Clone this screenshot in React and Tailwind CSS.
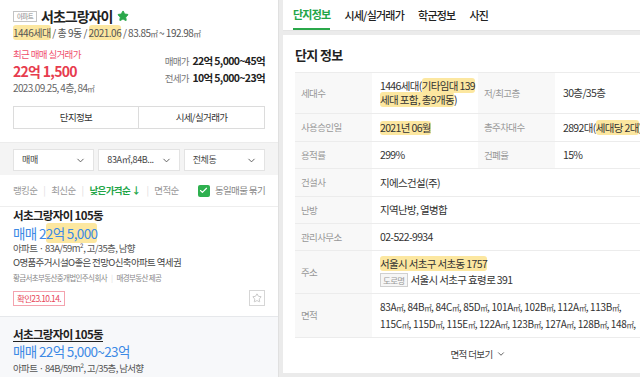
import { ChevronDown, Star, Check } from "lucide-react";

const Mark = ({ children }) => (
  <span className="bg-[#fce7a0] rounded-[3px]">{children}</span>
);

// narrow square-metre sign like the reference font
const M2 = () => <span className="text-[7.5px] tracking-[-0.1em]">㎡</span>;

const Select = ({ label }) => (
  <div className="h-[22px] bg-white border border-[#e3e3e3] flex items-center justify-between pl-[8px] pr-[7px]">
    <span className="text-[9px] text-[#444] tracking-[-0.04em]">{label}</span>
    <ChevronDown size={11} strokeWidth={2} className="text-[#555]" />
  </div>
);

const Row = ({ label, value, label2, value2, h }) => (
  <div className={`flex border-b border-[#ececec] ${h}`}>
    <div className="w-[77px] shrink-0 bg-[#f8f8f8] pl-[6px] flex items-center text-[9.5px] text-[#999]">
      {label}
    </div>
    {label2 ? (
      <>
        <div className="w-[106px] shrink-0 pl-[8px] flex items-center text-[10.5px] text-[#333] leading-[14px]">
          {value}
        </div>
        <div className="w-[77px] shrink-0 bg-[#f8f8f8] pl-[6px] flex items-center text-[9.5px] text-[#999]">
          {label2}
        </div>
        <div className="w-[106px] shrink-0 pl-[8px] flex items-center text-[10.5px] text-[#333] whitespace-nowrap">
          {value2}
        </div>
      </>
    ) : (
      <div className="flex-1 pl-[8px] flex items-center text-[10.5px] text-[#333] leading-[16px]">
        {value}
      </div>
    )}
  </div>
);

const areas1 = ["83A", "84B", "84C", "85D", "101A", "102B", "112A", "113B"];
const areas2 = ["115C", "115D", "115E", "122A", "123B", "127A", "128B", "148"];

export default function App() {
  return (
    <div className="w-[640px] h-[377px] overflow-hidden flex bg-[#ebebeb] font-['Noto_Sans_CJK_KR',sans-serif] tracking-[-0.04em]">
      {/* Left: complex summary + listings */}
      <div className="w-[279px] shrink-0 bg-white border-r border-[#e0e0e0] flex flex-col">
        <div className="px-[13px] pt-[6px]">
          <div className="flex items-center h-[20px] gap-[4px]">
            <span className="border border-[#c4c4c4] text-[6.5px] text-[#888] px-[3px] leading-[9px]">아파트</span>
            <span className="text-[14px] font-bold text-[#222] tracking-[-0.07em]">서초그랑자이</span>
            <Star size={12} className="text-[#2aa84a] fill-[#2aa84a] ml-[1px]" />
          </div>
          <div className="h-[14px] leading-[14px] text-[10px] text-[#555] whitespace-nowrap tracking-[-0.05em]">
            <Mark>1446세대</Mark> / 총 9동 / <Mark>2021.06</Mark> / 83.85<M2 /> ~ 192.98<M2 />
          </div>
          <div className="flex justify-between mt-[7px]">
            <div>
              <div className="h-[14px] leading-[14px] text-[9.5px] text-[#f0506e]">최근 매매 실거래가</div>
              <div className="h-[20px] leading-[20px] text-[14px] font-bold text-[#e73c4e] tracking-[-0.05em]">22억 1,500</div>
              <div className="h-[14px] leading-[14px] text-[10px] text-[#666]">2023.09.25, 4층, 84<M2 /></div>
            </div>
            <div className="pt-[5px] text-right">
              <div className="h-[17px] leading-[17px] text-[9.5px] text-[#777]">
                매매가 <span className="text-[10.5px] font-bold text-[#222] ml-[2px]">22억 5,000~45억</span>
              </div>
              <div className="h-[17px] leading-[17px] text-[9.5px] text-[#777]">
                전세가 <span className="text-[10.5px] font-bold text-[#222] ml-[2px]">10억 5,000~23억</span>
              </div>
            </div>
          </div>
          <div className="mt-[11px] grid grid-cols-2 h-[23px] border border-[#dcdcdc]">
            <div className="flex items-center justify-center text-[9.5px] text-[#333] border-r border-[#dcdcdc]">단지정보</div>
            <div className="flex items-center justify-center text-[9.5px] text-[#333]">시세/실거래가</div>
          </div>
        </div>

        {/* filters */}
        <div className="mt-[13px] h-[33px] bg-[#f4f4f4] px-[13px] pt-[6px] grid grid-cols-3 gap-[4px] border-t border-[#ececec]">
          <Select label="매매" />
          <Select label="83A㎡,84B..." />
          <Select label="전체동" />
        </div>

        {/* sort */}
        <div className="h-[32px] px-[13px] flex items-center justify-between border-b border-[#eeeeee]">
          <div className="flex items-center text-[9.5px] text-[#999]">
            <span>랭킹순</span>
            <span className="mx-[6px] text-[#ddd]">|</span>
            <span>최신순</span>
            <span className="mx-[6px] text-[#ddd]">|</span>
            <span className="text-[#22a547] font-bold">낮은가격순 ↓</span>
            <span className="mx-[6px] text-[#ddd]">|</span>
            <span>면적순</span>
          </div>
          <div className="flex items-center gap-[5px] text-[9.5px] text-[#888]">
            <span className="w-[12px] h-[12px] bg-[#2eb04f] rounded-[2px] flex items-center justify-center">
              <Check size={9} strokeWidth={3} className="text-white" />
            </span>
            <span>동일매물 묶기</span>
          </div>
        </div>

        {/* listing 1 */}
        <div className="px-[13px] pt-[1px] pb-[10px] border-b border-[#e6e8eb]">
          <div className="h-[15px] leading-[15px] text-[11.5px] font-bold text-[#222]">서초그랑자이 105동</div>
          <div className="mt-[2px] h-[16px] leading-[16px] text-[13.5px] text-[#3d8ae5]">
            매매 2<Mark>2억 5,000</Mark>
          </div>
          <div className="h-[14px] leading-[14px] text-[9.5px] text-[#555]">아파트 · 83A/59m², 고/35층, 남향</div>
          <div className="h-[14px] leading-[14px] text-[9.5px] text-[#444]">O명품주거시설O좋은 전망O신축아파트 역세권</div>
          <div className="mt-[2px] h-[14px] leading-[14px] text-[7.5px] text-[#888]">
            황금서초부동산중개법인주식회사 <span className="mx-[3px] text-[#ddd]">|</span> 매경부동산 제공
          </div>
          <div className="mt-[5px] flex items-center justify-between">
            <span className="border border-[#f4a3ae] text-[#e8475a] text-[8.5px] h-[15px] leading-[13px] px-[3px]">확인23.10.14.</span>
            <span className="w-[16px] h-[16px] border border-[#d6d6d6] flex items-center justify-center bg-white">
              <Star size={10} strokeWidth={1.5} className="text-[#aaa]" />
            </span>
          </div>
        </div>

        {/* listing 2 */}
        <div className="flex-1 bg-[#f7f8fa] px-[13px] pt-[9px]">
          <div className="h-[16px] leading-[16px] text-[11.5px] font-bold text-[#222] underline underline-offset-2">서초그랑자이 105동</div>
          <div className="h-[18px] leading-[18px] text-[13.5px] text-[#3d8ae5]">매매 22억 5,000~23억</div>
          <div className="h-[16px] leading-[16px] text-[9.5px] text-[#555]">아파트 · 84B/59m², 고/35층, 남서향</div>
        </div>
      </div>

      {/* Right: complex info */}
      <div className="ml-[4px] w-[390px] shrink-0 flex flex-col">
        <div className="h-[31px] bg-white flex items-end gap-[14px] px-[10px] border-b border-[#e4e4e4]">
          <div className="h-full flex items-center border-b-2 border-[#2aa84a] text-[11px] font-bold text-[#22a547] tracking-[-0.07em]">단지정보</div>
          <div className="h-full flex items-center text-[11px] font-medium text-[#222] tracking-[-0.07em]">시세/실거래가</div>
          <div className="h-full flex items-center text-[11px] font-medium text-[#222] tracking-[-0.07em]">학군정보</div>
          <div className="h-full flex items-center text-[11px] font-medium text-[#222] tracking-[-0.07em]">사진</div>
        </div>
        <div className="mt-[4px] h-[338px] bg-white px-[12px] pt-[11px]">
          <div className="h-[18px] leading-[18px] text-[13px] font-bold text-[#222]">단지 정보</div>
          <div className="mt-[8px] border-t border-[#ececec]">
            <Row
              h="h-[41px]"
              label="세대수"
              value={
                <span>
                  1446세대(<Mark>기타임대 139</Mark>
                  <br />
                  <Mark>세대 포함, 총9개동</Mark>)
                </span>
              }
              label2="저/최고층"
              value2="30층/35층"
            />
            <Row h="h-[28px]" label="사용승인일" value={<Mark>2021년 06월</Mark>} label2="총주차대수" value2={<span>2892대(<Mark>세대당 2대</Mark>)</span>} />
            <Row h="h-[27px]" label="용적률" value="299%" label2="건폐율" value2="15%" />
            <Row h="h-[28px]" label="건설사" value="지에스건설(주)" />
            <Row h="h-[27px]" label="난방" value="지역난방, 열병합" />
            <Row h="h-[27px]" label="관리사무소" value="02-522-9934" />
            <Row
              h="h-[43px]"
              label="주소"
              value={
                <div>
                  <div><Mark>서울시 서초구 서초동 1757</Mark></div>
                  <div className="flex items-center gap-[3px]">
                    <span className="border border-[#d0d0d0] bg-[#f6f6f6] text-[#999] text-[8.5px] leading-[12px] px-[2px]">도로명</span>
                    서울시 서초구 효령로 391
                  </div>
                </div>
              }
            />
            <Row
              h="h-[44px]"
              label="면적"
              value={
                <div className="whitespace-nowrap text-[10px] tracking-[-0.03em]">
                  <div>
                    {areas1.map((a) => (
                      <span key={a}>{a}<M2 />, </span>
                    ))}
                  </div>
                  <div>
                    {areas2.map((a) => (
                      <span key={a}>{a}<M2 />, </span>
                    ))}
                  </div>
                </div>
              }
            />
          </div>
          <div className="h-[32px] flex items-center justify-center gap-[3px] text-[9.5px] text-[#444]">
            면적 더보기 <ChevronDown size={10} strokeWidth={2} />
          </div>
        </div>
      </div>
    </div>
  );
}
